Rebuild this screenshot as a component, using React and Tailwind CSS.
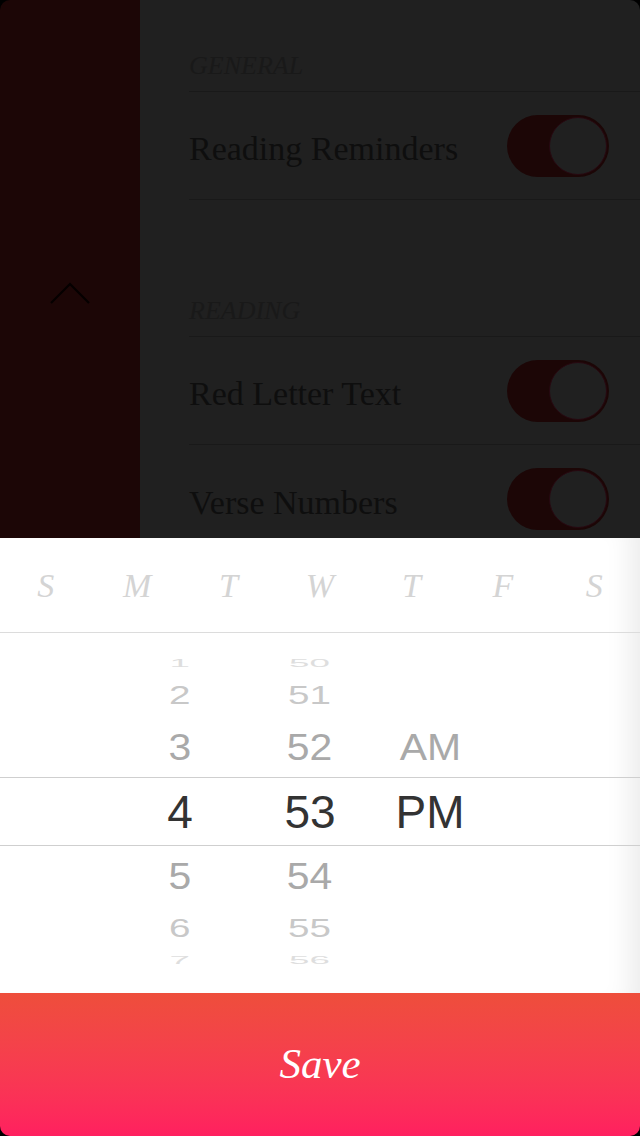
import React from 'react';

const serif = { fontFamily: '"Liberation Serif", "DejaVu Serif", serif' };
const sans = { fontFamily: '"Liberation Sans", Arial, sans-serif' };

const days = ['S', 'M', 'T', 'W', 'T', 'F', 'S'];

const pickerRows = [
    { box: 'h-[20px]', text: 'scale-x-[0.8] scale-y-[0.22] text-[#dedede]', hr: '1', mn: '50' },
    { box: 'h-[44px]', text: 'scale-x-[0.84] scale-y-[0.58] text-[#c8c8c8]', hr: '2', mn: '51' },
    { box: 'h-[60px]', text: 'scale-x-[0.89] scale-y-[0.8] text-[#a9a9a9]', hr: '3', mn: '52', ap: 'AM' },
    { box: 'h-[69px] border-y border-[#cfcfcf]', text: 'text-[#333333]', hr: '4', mn: '53', ap: 'PM' },
    { box: 'h-[60px]', text: 'scale-x-[0.89] scale-y-[0.8] text-[#a9a9a9]', hr: '5', mn: '54' },
    { box: 'h-[44px]', text: 'scale-x-[0.84] scale-y-[0.58] text-[#c8c8c8]', hr: '6', mn: '55' },
    { box: 'h-[20px]', text: 'scale-x-[0.8] scale-y-[0.22] text-[#dedede]', hr: '7', mn: '56' },
];

function Toggle() {
    return (
        <div className="w-[102px] h-[62px] rounded-full bg-[#1c0606] flex items-center justify-end pr-[2px]">
            <div className="w-[58px] h-[58px] rounded-full bg-[#202020] border-[1.5px] border-[#270810]" />
        </div>
    );
}

function SettingRow({ label, border = true }) {
    return (
        <div className={`h-[108px] flex items-center justify-between pr-[31px] ${border ? 'border-b border-[#191919]' : ''}`}>
            <span className="text-[34px] text-[#0e0e0e] pt-[6px]" style={serif}>{label}</span>
            <Toggle />
        </div>
    );
}

function SectionHeader({ title, height }) {
    return (
        <div className={`${height} flex items-end pb-[12px] border-b border-[#191919]`}>
            <span className="text-[26px] italic leading-[26px] text-[#191919]" style={serif}>{title}</span>
        </div>
    );
}

export default function App() {
    return (
        <div className="w-[640px] h-[1136px] bg-black overflow-hidden flex flex-col">
            {/* dimmed settings screen */}
            <div className="h-[538px] flex rounded-t-[10px] overflow-hidden shrink-0">
                <div className="w-[140px] bg-[#1c0606] flex justify-center pt-[282px]">
                    <svg width="40" height="22" viewBox="0 0 40 22" fill="none">
                        <path d="M1 21 L20 2 L39 21" stroke="#050000" strokeWidth="2.2" />
                    </svg>
                </div>
                <div className="flex-1 bg-[#202020] pl-[49px]">
                    <SectionHeader title="GENERAL" height="h-[92px]" />
                    <SettingRow label="Reading Reminders" />
                    <SectionHeader title="READING" height="h-[137px]" />
                    <SettingRow label="Red Letter Text" />
                    <SettingRow label="Verse Numbers" border={false} />
                </div>
            </div>

            {/* time picker sheet */}
            <div className="h-[455px] bg-white shrink-0 flex flex-col shadow-[inset_-30px_0_26px_-20px_rgba(0,0,0,0.08)]">
                <div className="h-[95px] flex items-center border-b border-[#dcdcdc] shrink-0">
                    {days.map((d, i) => (
                        <div key={i} className="flex-1 text-center text-[34px] italic text-[#d4d4d4]" style={serif}>
                            {d}
                        </div>
                    ))}
                </div>
                <div className="pt-[20px]" style={sans}>
                    {pickerRows.map((r) => (
                        <div key={r.hr} className={`${r.box} flex items-center`}>
                            <div className="ml-[130px] w-[100px] flex justify-center">
                                <span className={`text-[46px] leading-none ${r.text}`}>{r.hr}</span>
                            </div>
                            <div className="ml-[30px] w-[100px] flex justify-center">
                                <span className={`text-[46px] leading-none ${r.text}`}>{r.mn}</span>
                            </div>
                            <div className="ml-[20px] w-[100px] flex justify-center">
                                {r.ap && <span className={`text-[46px] leading-none ${r.text}`}>{r.ap}</span>}
                            </div>
                        </div>
                    ))}
                </div>
            </div>

            {/* save */}
            <button className="h-[143px] shrink-0 rounded-b-[10px] bg-linear-to-b from-[#ee4e3b] to-[#ff1f5f] flex items-center justify-center">
                <span className="text-[43px] italic text-white" style={serif}>Save</span>
            </button>
        </div>
    );
}
